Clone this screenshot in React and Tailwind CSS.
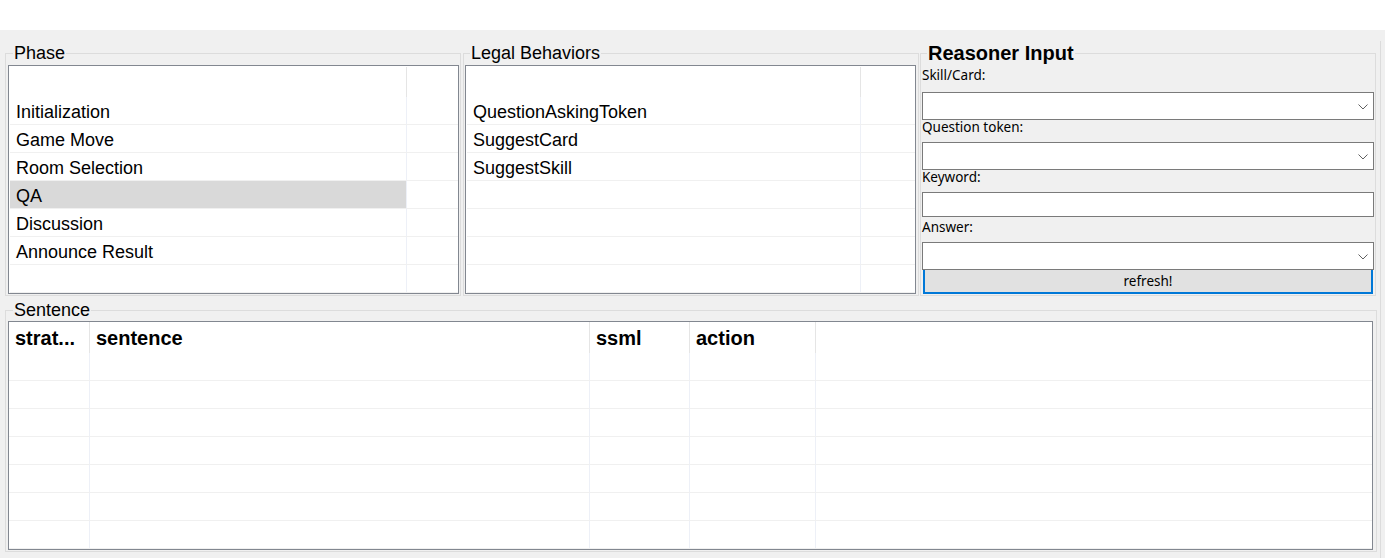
import React from "react";

const phaseItems = ["Initialization", "Game Move", "Room Selection", "QA", "Discussion", "Announce Result", ""];
const legalItems = ["QuestionAskingToken", "SuggestCard", "SuggestSkill", "", "", "", ""];

function ListBox({ items, selected, colW }) {
  return (
    <div className="w-[451px] h-[229px] border border-[#828790] bg-white overflow-hidden">
      <div className="flex h-[31px] ml-[1px]">
        <div className={colW + " border-r border-[#e5e5e5] mt-[1px]"} />
        <div className="flex-1" />
      </div>
      {items.map((it, i) => (
        <div key={i} className="flex h-[28px] ml-[1px] border-b border-[#f0f0f0]">
          <div
            className={
              colW +
              " border-r border-[#edf0f7] pl-[6px] pt-[2px] text-[18px] leading-[26px] whitespace-nowrap " +
              (i === selected ? "bg-[#d9d9d9]" : "")
            }
          >
            {it}
          </div>
          <div className="flex-1" />
        </div>
      ))}
    </div>
  );
}

function Chevron() {
  return (
    <svg width="10" height="6" viewBox="0 0 10 6" className="mt-[1px]">
      <path d="M0.5 0.5 L5 5 L9.5 0.5" fill="none" stroke="#606060" strokeWidth="1" />
    </svg>
  );
}

function Combo() {
  return (
    <div className="h-[28px] border border-[#7a7a7a] bg-white flex items-center justify-end pr-[5px]">
      <Chevron />
    </div>
  );
}

const labelCls = "font-['Noto_Sans',sans-serif] text-[13.5px] leading-[14px] text-[#000] whitespace-nowrap";

export default function App() {
  const cols = [
    { w: "w-[81px]", t: "strat..." },
    { w: "w-[500px]", t: "sentence" },
    { w: "w-[100px]", t: "ssml" },
    { w: "w-[126px]", t: "action" },
  ];
  return (
    <div className="w-[1385px] h-[558px] bg-white overflow-hidden font-['Liberation_Sans',Arial,sans-serif] text-black">
      <div className="h-[30px] bg-white" />
      <div className="h-[528px] bg-[#f0f0f0] flex">
        <div className="w-[1380px] pl-[5px] pt-[14px] flex flex-col">
          <div className="flex items-start">
            <fieldset className="w-[456px] border border-[#dcdcdc] pl-[2px] pr-[1px] pt-[3px] pb-[1px]">
              <legend className="ml-[5px] px-[1px] text-[18px] leading-[18px]">Phase</legend>
              <ListBox items={phaseItems} selected={3} colW="w-[397px]" />
            </fieldset>
            <fieldset className="ml-[2px] w-[456px] border border-[#dcdcdc] pl-[1px] pr-[2px] pt-[3px] pb-[1px]">
              <legend className="ml-[5px] px-[1px] text-[18px] leading-[18px]">Legal Behaviors</legend>
              <ListBox items={legalItems} selected={-1} colW="w-[394px]" />
            </fieldset>
            <fieldset className="ml-[1px] -mt-[1px] w-[456px] border border-[#dcdcdc] pl-[1px] pr-[1px] pb-[1px]">
              <legend className="ml-[5px] px-[1px] text-[20px] leading-[20px] font-bold">Reasoner Input</legend>
              <div className="flex flex-col">
                <div className={"h-[29px] pt-[5px] " + labelCls}>Skill/Card:</div>
                <Combo />
                <div className={"h-[22px] " + labelCls}>Question token:</div>
                <Combo />
                <div className={"h-[22px] " + labelCls}>Keyword:</div>
                <div className="h-[25px] border border-[#7a7a7a] bg-white" />
                <div className={"h-[25px] pt-[3px] " + labelCls}>Answer:</div>
                <Combo />
                <button className="mx-[1px] h-[24px] border-x-2 border-b-2 border-[#0078d7] bg-[#e1e1e1] text-center font-['Noto_Sans',sans-serif] text-[13.5px] leading-[22px] text-black">
                  refresh!
                </button>
              </div>
            </fieldset>
          </div>
          <fieldset className="mt-[5px] w-[1372px] border border-[#dcdcdc] pl-[2px] pr-[3px] pt-[2px] pb-[1px]">
            <legend className="ml-[5px] px-[1px] text-[18px] leading-[18px]">Sentence</legend>
            <div className="w-[1365px] h-[229px] border border-[#828790] bg-white overflow-hidden">
              <div className="flex h-[31px]">
                {cols.map((c, i) => (
                  <div
                    key={i}
                    className={c.w + " border-r border-[#e5e5e5] pl-[6px] pt-[2px] text-[20px] leading-[29px] font-bold whitespace-nowrap"}
                  >
                    {c.t}
                  </div>
                ))}
                <div className="flex-1" />
              </div>
              {[0, 1, 2, 3, 4, 5, 6].map((r) => (
                <div key={r} className="flex h-[28px] border-b border-[#f0f0f0]">
                  {cols.map((c, i) => (
                    <div key={i} className={c.w + " border-r border-[#edf0f7]"} />
                  ))}
                  <div className="flex-1" />
                </div>
              ))}
            </div>
          </fieldset>
        </div>
        <div className="mt-[11px] border-l border-[#dcdcdc]" />
      </div>
    </div>
  );
}
